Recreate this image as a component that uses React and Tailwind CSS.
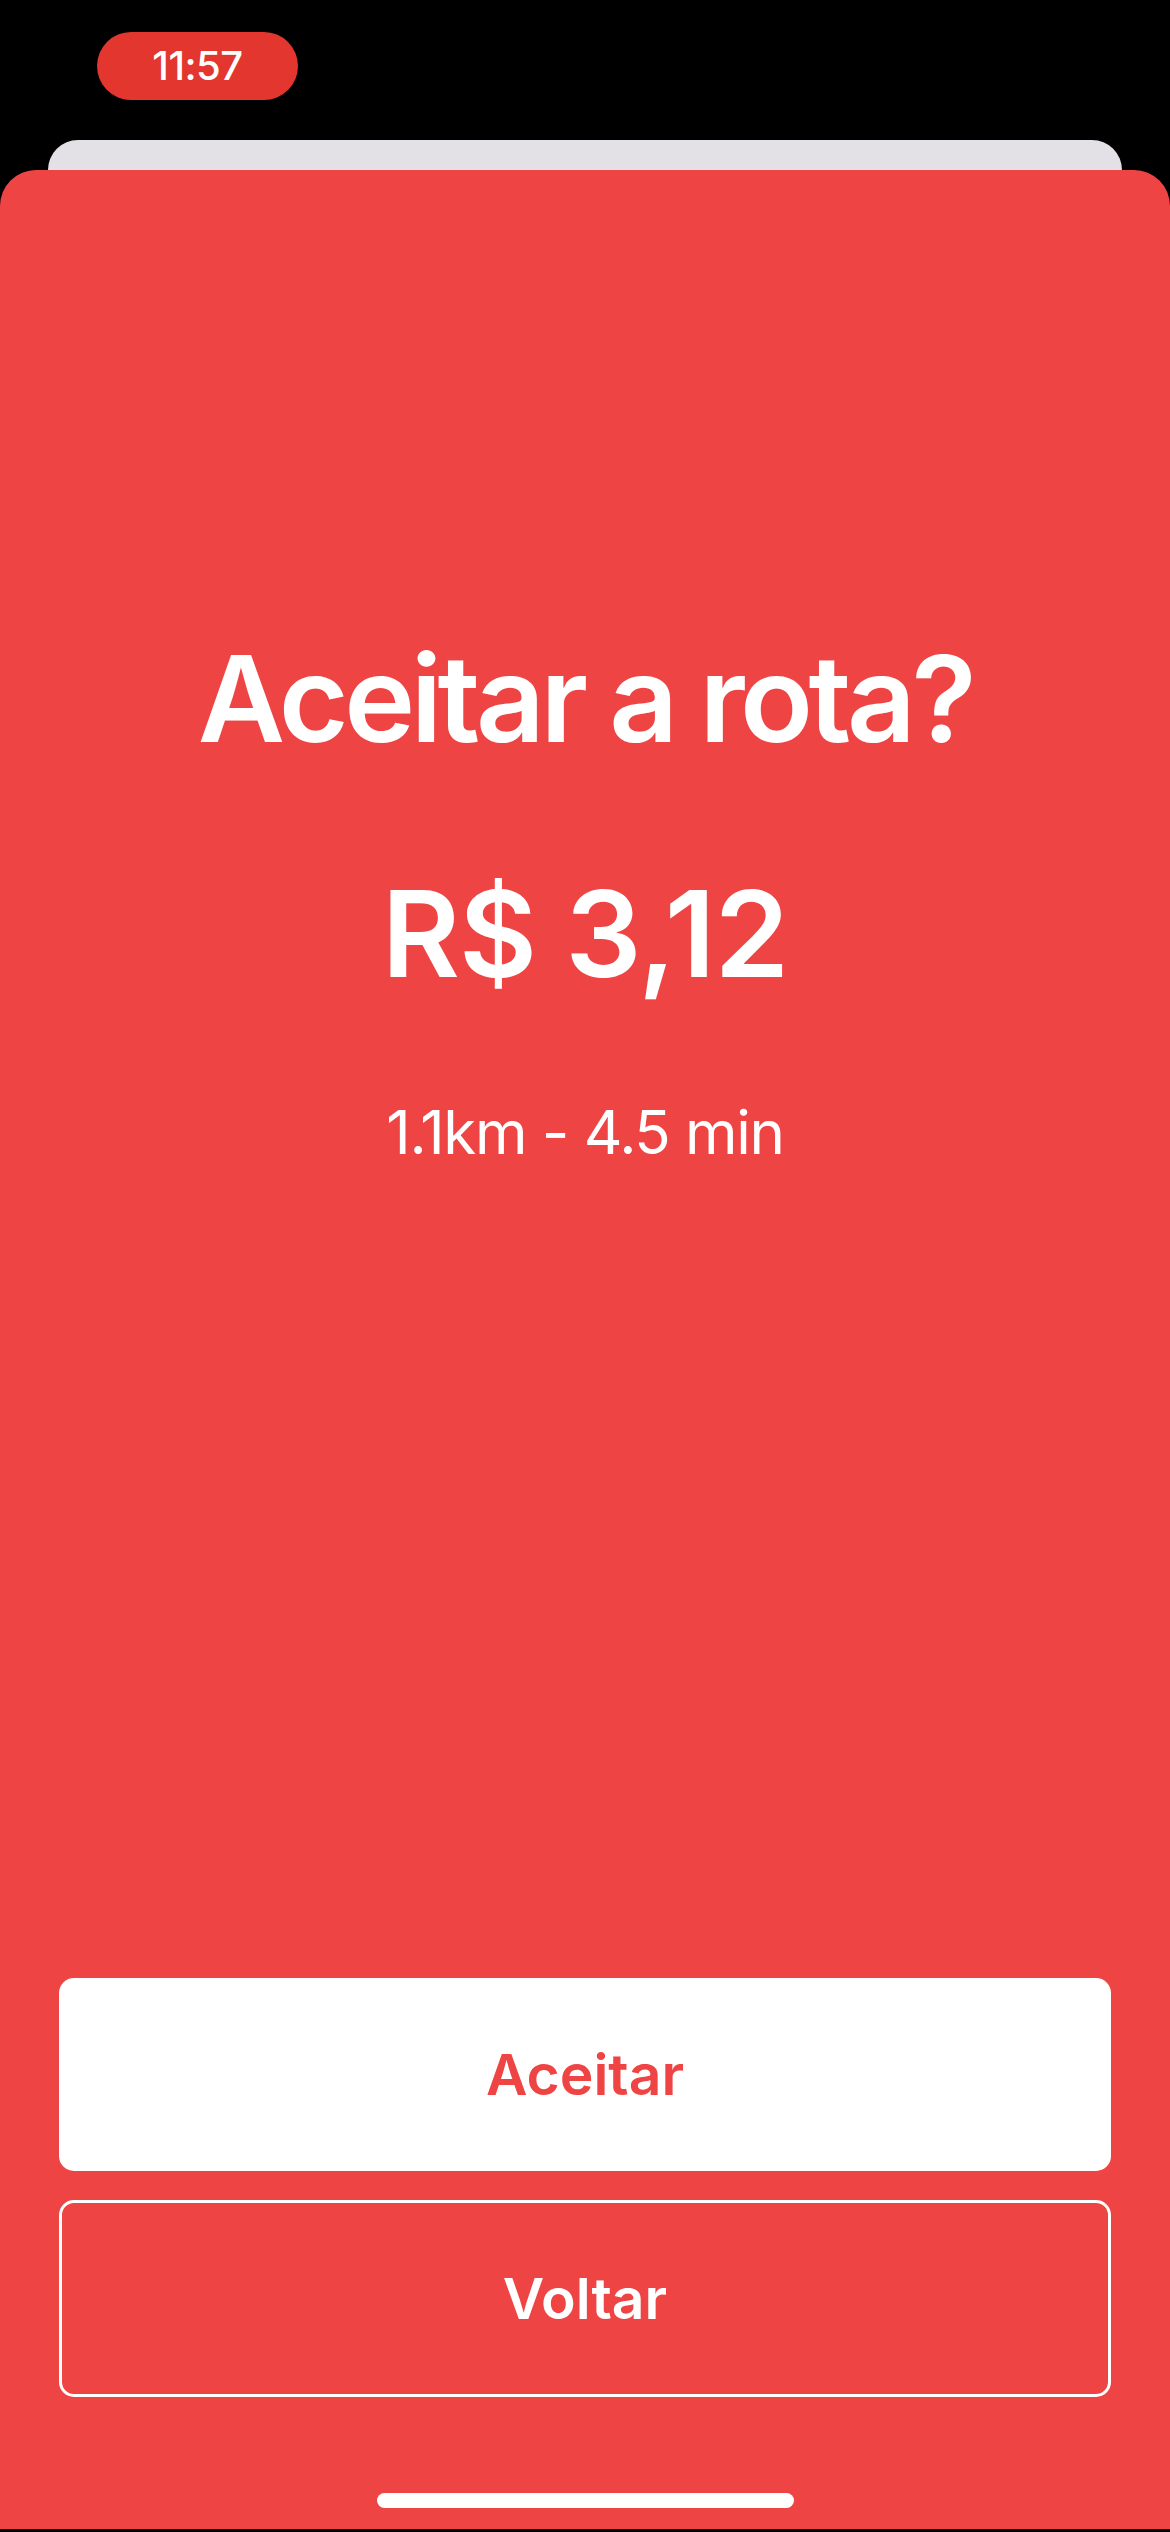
import React from "react";

const font = { fontFamily: "Inter, 'Noto Sans', sans-serif" };

const RouteOfferPage = () => {
  return (
    <div
      className="w-[1170px] h-[2532px] bg-black flex flex-col overflow-hidden font-['Inter','Noto_Sans',sans-serif]"
      style={font}
    >
      {/* status bar */}
      <div className="h-[140px] pl-[97px] pt-[32px]">
        <div className="w-[201px] h-[68px] rounded-[34px] bg-[#e3362f] flex items-center justify-center">
          <span className="text-white text-[40px] font-medium tracking-[-0.5px]">11:57</span>
        </div>
      </div>

      {/* card behind the sheet */}
      <div className="mx-[48px] h-[30px] rounded-t-[30px] bg-[#e3e1e6]" />

      {/* sheet */}
      <div className="flex-1 bg-[#ef4444] rounded-t-[36px] flex flex-col items-center">
        <h1 className="mt-[469px] text-white text-[120px] leading-[120px] font-semibold tracking-[-4.5px]">
          Aceitar a rota?
        </h1>
        <p className="mt-[115px] text-white text-[120px] leading-[120px] font-semibold tracking-[-1px]">
          R$ 3,12
        </p>
        <p className="mt-[108px] text-white text-[60px] leading-[60px] font-normal tracking-[-1.3px]">
          1.1km - 4.5 min
        </p>

        <div className="mt-auto w-full px-[59px] flex flex-col gap-[29px]">
          <button className="h-[193px] w-full rounded-[15px] bg-white text-[#ef4444] text-[57px] font-semibold">
            Aceitar
          </button>
          <button className="h-[197px] w-full rounded-[15px] border-[3px] border-white text-white text-[57px] font-semibold">
            Voltar
          </button>
        </div>

        <div className="mt-[96px] mb-[21px] w-[417px] h-[15px] rounded-full bg-white" />
      </div>
      <div className="h-[3px] bg-black" />
    </div>
  );
};

export default function App() {
  return <RouteOfferPage />;
}
